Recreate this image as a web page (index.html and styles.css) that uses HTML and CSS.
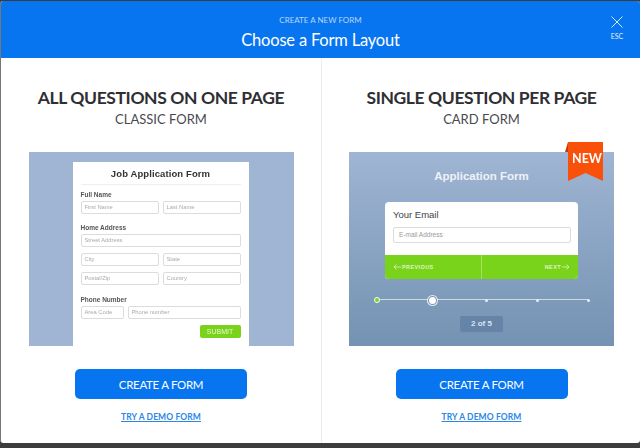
FILE: index.html
```html
<!DOCTYPE html>
<html lang="en">
<head>
    <meta charset="UTF-8">
    <title>Choose a Form Layout</title>
    <link rel="stylesheet" href="styles.css">
</head>
<body>
    <div class="modal">
        <div class="header">
            <div class="header-small">CREATE A NEW FORM</div>
            <div class="header-title">Choose a Form Layout</div>
            <div class="close">
                <svg width="12" height="12" viewBox="0 0 12 12"><path d="M.5 .5L11.500 11.500M11.500 .5L.5 11.500" stroke="#dce9fb" stroke-width="1" fill="none"/></svg>
                <span>ESC</span>
            </div>
        </div>
        <div class="columns">
            <div class="column column-left">
                <h2>ALL QUESTIONS ON ONE PAGE</h2>
                <div class="subtitle">CLASSIC FORM</div>
                <div class="preview preview-classic">
                    <div class="sheet">
                        <div class="sheet-title">Job Application Form</div>
                        <div class="label label-first">Full Name</div>
                        <div class="row">
                            <div class="field">First Name</div>
                            <div class="field">Last Name</div>
                        </div>
                        <div class="label">Home Address</div>
                        <div class="row"><div class="field">Street Address</div></div>
                        <div class="row row-next">
                            <div class="field">City</div>
                            <div class="field">State</div>
                        </div>
                        <div class="row row-next">
                            <div class="field">Postal/Zip</div>
                            <div class="field">Country</div>
                        </div>
                        <div class="label label-phone">Phone Number</div>
                        <div class="row">
                            <div class="field field-area">Area Code</div>
                            <div class="field">Phone number</div>
                        </div>
                        <div class="submit-row"><div class="submit">SUBMIT</div></div>
                    </div>
                </div>
                <button class="create-btn">CREATE A FORM</button>
                <a class="demo-link" href="#">TRY A DEMO FORM</a>
            </div>
            <div class="column column-right">
                <h2>SINGLE QUESTION PER PAGE</h2>
                <div class="subtitle">CARD FORM</div>
                <div class="preview preview-card">
                    <svg class="ribbon" width="38" height="39" viewBox="0 0 38 39">
                        <path d="M3 0L0 10H3Z" fill="#c53d05"/>
                        <path d="M3 0H38V39L20.500 31L3 39Z" fill="#f9510a"/>
                    </svg>
                    <span class="ribbon-text">NEW</span>
                    <div class="card-title">Application Form</div>
                    <div class="card">
                        <div class="card-body">
                            <div class="card-question">Your Email</div>
                            <div class="card-input">E-mail Address</div>
                        </div>
                        <div class="card-nav">
                            <div class="nav-half">
                                <svg width="8" height="6" viewBox="0 0 8 6"><path d="M8 3H1M3.500 .5L1 3L3.500 5.500" stroke="#dff3c4" stroke-width=".8" fill="none"/></svg>
                                PREVIOUS
                            </div>
                            <div class="nav-half nav-next">
                                NEXT
                                <svg width="8" height="6" viewBox="0 0 8 6"><path d="M0 3H7M4.500 .5L7 3L4.500 5.500" stroke="#dff3c4" stroke-width=".8" fill="none"/></svg>
                            </div>
                        </div>
                    </div>
                    <div class="steps">
                        <span class="step step-done"></span>
                        <span class="step step-current"></span>
                        <span class="step"></span>
                        <span class="step"></span>
                        <span class="step"></span>
                    </div>
                    <div class="pill">2 of 5</div>
                </div>
                <button class="create-btn">CREATE A FORM</button>
                <a class="demo-link" href="#">TRY A DEMO FORM</a>
            </div>
        </div>
    </div>
</body>
</html>
```

FILE: styles.css
```css
* {
    box-sizing: border-box;
}

html, body {
    margin: 0;
    height: 448px;
    overflow: hidden;
}

body {
    background-color: #3c3c3c;
    font-family: "Lato", "Liberation Sans", sans-serif;
    padding-top: 1px;
}

.modal {
    height: 442px;
    margin: 0;
    background-color: #fff;
    border-radius: 3px;
    border-left: 1px solid #777;
    overflow: hidden;
    display: flex;
    flex-direction: column;
}

/* blue top bar */
.header {
    position: relative;
    height: 57px;
    background-color: #0875f0;
    color: #fff;
    text-align: center;
    padding-top: 14px;
}

.header-small {
    font-size: 8px;
    line-height: 11px;
    color: #b9d6fa;
}

.header-title {
    font-size: 16.500px;
    line-height: 22px;
    letter-spacing: -.2px;
    margin-top: 3px;
}

.close {
    position: absolute;
    top: 15px;
    right: 13px;
    width: 20px;
    display: flex;
    flex-direction: column;
    align-items: center;
    font-size: 7px;
    line-height: 9px;
    color: #e6f0fd;
}

.close span {
    margin-top: 4px;
}

.columns {
    flex: 1;
    display: flex;
}

.column {
    flex: 1;
    display: flex;
    flex-direction: column;
    align-items: center;
    padding-top: 29px;
}

.column-left {
    flex: 0 0 321px;
    border-right: 1px solid #ececec;
}

.column-right {
    padding-left: 1px;
}

h2 {
    margin: 0;
    font-size: 17.500px;
    line-height: 22px;
    letter-spacing: -.4px;
    font-weight: 700;
    color: #2f2f33;
}

.subtitle {
    margin-top: 1px;
    font-size: 13px;
    line-height: 18px;
    color: #4a4a4e;
}

.preview {
    position: relative;
    width: 265px;
    height: 194px;
    margin-top: 24px;
    filter: blur(.4px);
}

.preview-classic {
    background-color: #9fb5d3;
    padding: 10px 45px 0 44px;
    overflow: hidden;
}

.sheet {
    background-color: #fff;
    height: 184px;
    padding: 0 8px;
    font-family: "Liberation Sans", Arial, sans-serif;
}

.sheet-title {
    height: 23px;
    line-height: 24px;
    font-size: 9.500px;
    font-weight: 700;
    color: #333;
    text-align: center;
    letter-spacing: .1px;
    border-bottom: 1px solid #eee;
}

.label {
    font-size: 6.500px;
    font-weight: 700;
    line-height: 8px;
    color: #555;
    margin: 10px 0 2px;
}

.label-first {
    margin-top: 6px;
}

.label-phone {
    margin-top: 11px;
}

.row {
    display: flex;
    gap: 4px;
}

.row-next {
    margin-top: 6px;
}

.field {
    flex: 1;
    height: 13px;
    border: 1px solid #dcdcdc;
    border-radius: 2px;
    padding-left: 3px;
    font-size: 5.800px;
    line-height: 11px;
    color: #aaa;
}

.field-area {
    flex: 0 0 43px;
}

.submit-row {
    display: flex;
    justify-content: flex-end;
    margin-top: 6px;
}

.submit {
    width: 41px;
    height: 13px;
    line-height: 13px;
    background-color: #7ad31b;
    border-radius: 2px;
    color: #e6f8d2;
    font-size: 7px;
    text-align: center;
}

.preview-card {
    background: linear-gradient(#9fb5d3, #7492b2);
    display: flex;
    flex-direction: column;
    align-items: center;
    font-family: "Liberation Sans", Arial, sans-serif;
}

.ribbon {
    position: absolute;
    top: -10px;
    right: 11px;
}

.ribbon-text {
    position: absolute;
    top: -1px;
    right: 12px;
    font-family: "Lato", sans-serif;
    font-size: 12.500px;
    line-height: 16px;
    font-weight: 700;
    color: #fff;
}

.card-title {
    margin-top: 17px;
    height: 14px;
    line-height: 14px;
    font-size: 11.500px;
    font-weight: 700;
    color: #eef2f7;
}

.card {
    width: 193px;
    height: 77px;
    margin-top: 19px;
    border-radius: 4px;
    overflow: hidden;
    background-color: #fff;
}

.card-body {
    height: 53px;
    padding: 7px 7px 0 8px;
}

.card-question {
    font-size: 9.500px;
    line-height: 12px;
    color: #444;
}

.card-input {
    height: 16px;
    margin-top: 6px;
    border: 1px solid #dcdcdc;
    border-radius: 2px;
    padding-left: 5px;
    font-size: 6.500px;
    line-height: 14px;
    color: #999;
}

.card-nav {
    height: 24px;
    display: flex;
    background-color: #7ad31b;
}

.nav-half {
    flex: 1;
    display: flex;
    align-items: center;
    gap: 1px;
    padding: 0 8px;
    font-size: 5.500px;
    font-weight: 700;
    letter-spacing: .4px;
    color: #dff3c4;
}

.nav-next {
    justify-content: flex-end;
    border-left: 1px solid #a4e25e;
}

.steps {
    position: relative;
    width: 216px;
    height: 10px;
    margin-top: 16px;
    display: flex;
    justify-content: space-between;
    align-items: center;
}

.steps::before {
    content: "";
    position: absolute;
    left: 2px;
    right: 2px;
    top: 4px;
    height: 1px;
    background-color: #cfd9e6;
}

.step {
    position: relative;
    width: 3px;
    height: 3px;
    border-radius: 50%;
    background-color: #e6ecf3;
}

.step-done {
    width: 6px;
    height: 6px;
    background-color: #7ad31b;
    border: 1px solid #fff;
}

.step-current {
    width: 9px;
    height: 9px;
    background-color: #fff;
    box-shadow: 0 0 0 1px #7492b2 inset, 0 0 0 1px #e6ecf3;
}

.pill {
    width: 43px;
    height: 16px;
    line-height: 16px;
    margin-top: 11px;
    border-radius: 2px;
    background-color: #6584a8;
    color: #dbe3ed;
    font-size: 8px;
    font-weight: 700;
    text-align: center;
}

.create-btn {
    display: block;
    width: 172px;
    height: 30px;
    margin-top: 23px;
    border: none;
    border-radius: 5px;
    background-color: #0875f0;
    color: #fff;
    font-family: "Lato", "Liberation Sans", sans-serif;
    font-size: 11.500px;
    letter-spacing: -.3px;
    cursor: pointer;
}

.demo-link {
    margin-top: 12px;
    font-size: 8.500px;
    line-height: 13px;
    font-weight: 700;
    letter-spacing: .1px;
    color: #2b86e8;
}
```
